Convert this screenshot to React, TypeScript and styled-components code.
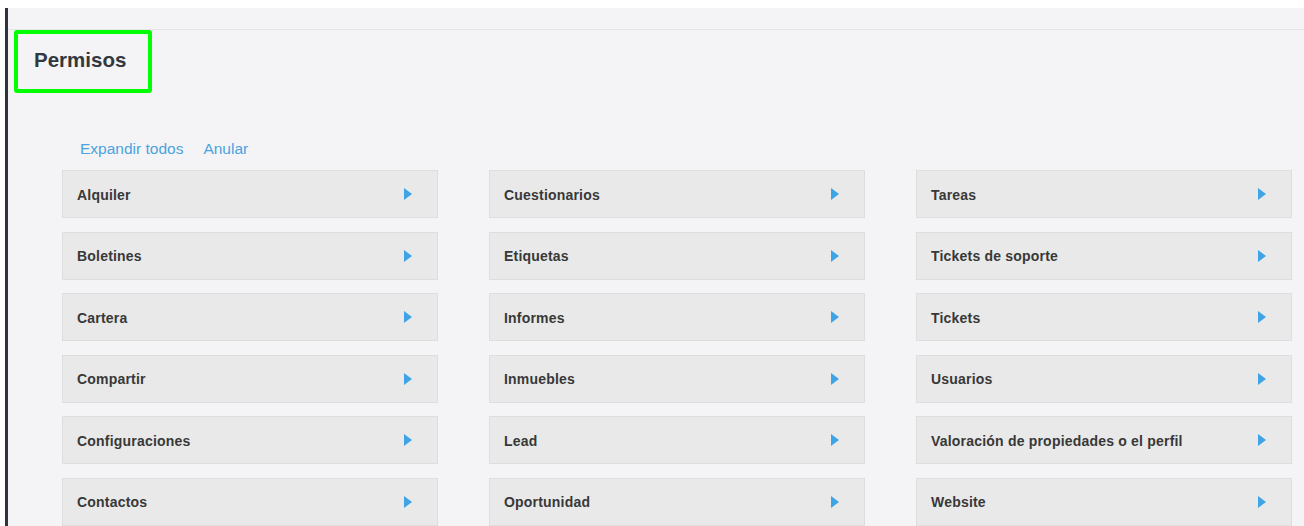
import React from "react";
import styled, { createGlobalStyle } from "styled-components";

const Global = createGlobalStyle`
  html, body { margin: 0; padding: 0; background: #ffffff; }
  body { font-family: "Liberation Sans", Arial, sans-serif; }
`;

const Shell = styled.div`
  padding-top: 8px;
  padding-left: 5px;
  height: 518px;
  display: flex;
`;

const Rail = styled.div`
  width: 3px;
  background: #2f343c;
  flex: none;
`;

const Page = styled.main`
  flex: 1;
  background: #f4f4f6;
  display: flex;
  flex-direction: column;
  overflow: hidden;
`;

const TopStrip = styled.div`
  height: 21px;
  border-bottom: 1px solid #e5e5e8;
`;

const TitleBox = styled.div`
  margin-left: 6px;
  width: 114px;
  height: 55px;
  border: 4px solid #00ff00;
  border-radius: 3px;
  display: flex;
  align-items: center;
  padding-left: 16px;
  box-sizing: content-box;
  flex: none;
`;

const Title = styled.h2`
  margin: 0;
  margin-top: -4px;
  font-size: 20.5px;
  font-weight: bold;
  color: #333840;
`;

const Body = styled.section`
  padding: 44px 12px 0 54px;
`;

const Links = styled.div`
  display: flex;
  gap: 20px;
  padding-left: 18px;
  height: 24px;
  align-items: center;
  margin-bottom: 9px;
`;

const LinkText = styled.a`
  font-size: 15.5px;
  color: #4aa3e0;
  text-decoration: none;
  cursor: pointer;
`;

const Grid = styled.div`
  display: grid;
  grid-template-columns: repeat(3, 376px);
  column-gap: 51px;
`;

const Column = styled.div`
  display: flex;
  flex-direction: column;
  gap: 13.6px;
`;

const Card = styled.div`
  height: 48px;
  box-sizing: border-box;
  background: #e9e9e9;
  border: 1px solid #dededf;
  display: flex;
  align-items: center;
  justify-content: space-between;
  padding: 0 25px 0 14px;
`;

const CardLabel = styled.span`
  font-size: 14px;
  letter-spacing: 0.2px;
  font-weight: bold;
  color: #383838;
  margin-top: 1px;
`;

const Arrow = () => (
  <svg width="8" height="12" viewBox="0 0 8 12" aria-hidden="true">
    <path d="M0 0 L8 6 L0 12 Z" fill="#3ea4e6" />
  </svg>
);

const columns: string[][] = [
  ["Alquiler", "Boletines", "Cartera", "Compartir", "Configuraciones", "Contactos"],
  ["Cuestionarios", "Etiquetas", "Informes", "Inmuebles", "Lead", "Oportunidad"],
  [
    "Tareas",
    "Tickets de soporte",
    "Tickets",
    "Usuarios",
    "Valoración de propiedades o el perfil",
    "Website",
  ],
];

export default function App() {
  return (
    <>
      <Global />
      <Shell>
        <Rail />
        <Page>
          <TopStrip />
          <TitleBox>
            <Title>Permisos</Title>
          </TitleBox>
          <Body>
            <Links>
              <LinkText>Expandir todos</LinkText>
              <LinkText>Anular</LinkText>
            </Links>
            <Grid>
              {columns.map((col, i) => (
                <Column key={i}>
                  {col.map((name) => (
                    <Card key={name}>
                      <CardLabel>{name}</CardLabel>
                      <Arrow />
                    </Card>
                  ))}
                </Column>
              ))}
            </Grid>
          </Body>
        </Page>
      </Shell>
    </>
  );
}
